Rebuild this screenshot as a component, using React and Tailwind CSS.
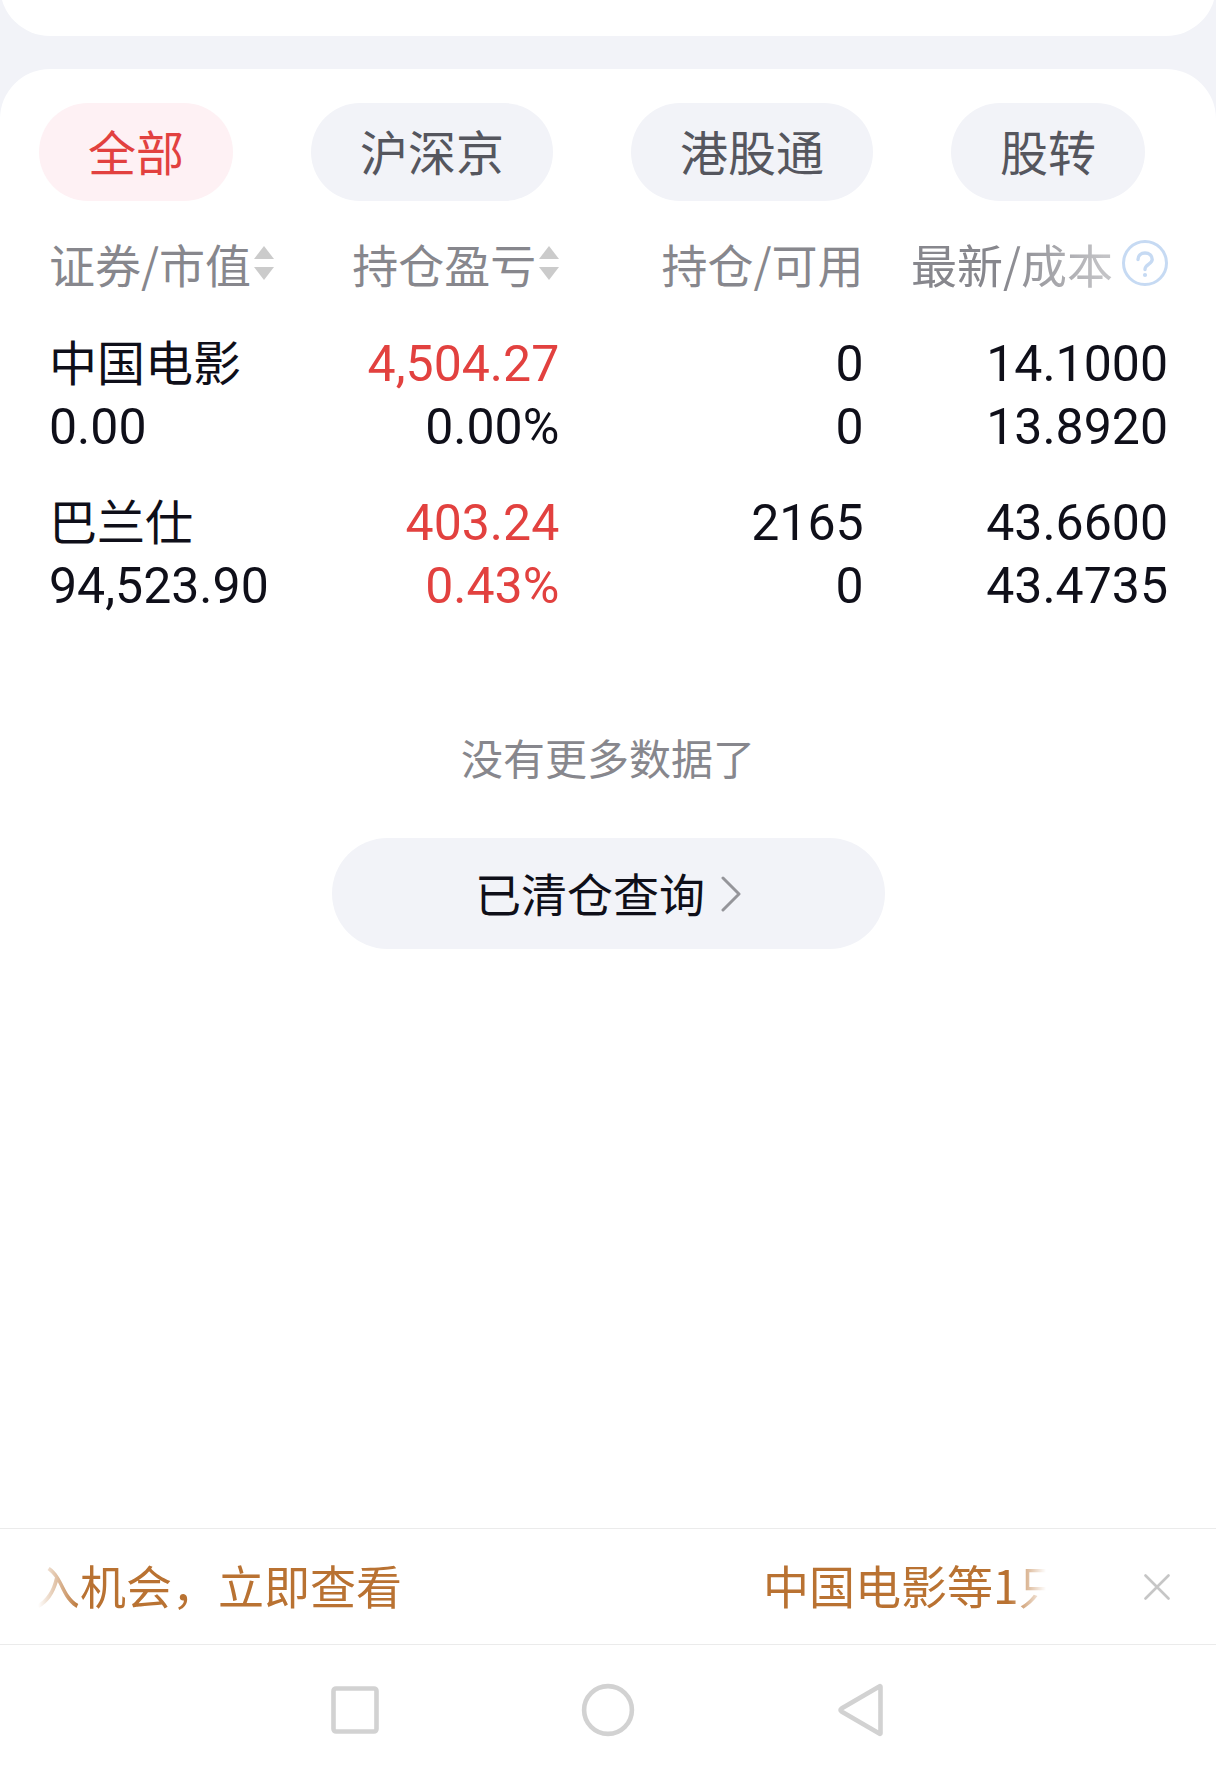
import React, { useState } from "react";

const tabs = ["全部", "沪深京", "港股通", "股转"];

const holdings = [
    { name: "中国电影", value: "0.00", profit: "4,504.27", rate: "0.00%", profitUp: true, rateUp: false, amount: "0", usable: "0", price: "14.1000", cost: "13.8920" },
    { name: "巴兰仕", value: "94,523.90", profit: "403.24", rate: "0.43%", profitUp: true, rateUp: true, amount: "2165", usable: "0", price: "43.6600", cost: "43.4735" },
];

const SortIcon = () => (
    <svg width="20" height="34" viewBox="0 0 20 34" fill="#cbcbcb" aria-hidden="true">
        <path d="M10 0 L20 13 H0 Z" />
        <path d="M10 34 L20 21 H0 Z" />
    </svg>
);

const HelpIcon = () => (
    <svg width="46" height="46" viewBox="0 0 46 46" fill="none" stroke="#c6daf3" aria-hidden="true">
        <circle cx="23" cy="23" r="21.5" strokeWidth="3" />
        <path d="M16 19.5 C16 15.5 19 13 23 13 C27.2 13 30.2 15.8 30.2 19.4 C30.2 24.2 23 24 23 29.5" strokeWidth="3.4" strokeLinecap="round" />
        <circle cx="23" cy="35" r="2.1" fill="#c6daf3" stroke="none" />
    </svg>
);

const Cell = ({ top, bottom, topUp, bottomUp }) => (
    <td className="pt-[18px] pb-[15px] text-right font-[Roboto,'Noto_Sans_CJK_SC',sans-serif] text-[50px] leading-[63px]">
        <div className={topUp ? "text-[#e2413f]" : ""}>{top}</div>
        <div className={bottomUp ? "text-[#e2413f]" : ""}>{bottom}</div>
    </td>
);

const App = () => {
    const [active, setActive] = useState("全部");
    const [showNotice, setShowNotice] = useState(true);

    return (
        <div className="flex min-h-screen flex-col bg-[#f2f3f8] font-['Noto_Sans_CJK_SC',sans-serif] text-[#0f0f19]">
            <div className="flex h-9 items-end overflow-hidden">
                <div className="h-20 w-full shrink-0 rounded-b-[50px] bg-white" />
            </div>

            <main className="mt-[33px] flex-1 rounded-t-[50px] bg-white pt-[34px]">
                <nav className="flex gap-[78px] px-[39px]">
                    {tabs.map((tab) => (
                        <button
                            key={tab}
                            type="button"
                            onClick={() => setActive(tab)}
                            className={`h-[98px] shrink-0 rounded-full px-[49px] pb-1 text-[48px] leading-none ${active === tab ? "bg-[#fef1f4] text-[#e2413f]" : "bg-[#f2f3f8] text-[#55565e]"}`}
                        >
                            {tab}
                        </button>
                    ))}
                </nav>

                <div className="pr-12 pl-[49px]">
                    <table className="w-full table-fixed">
                        <thead className="text-[46px] leading-[63px] whitespace-nowrap text-[#87878d]">
                            <tr className="h-[114px]">
                                <th className="w-[22.8%] pt-2.5 font-normal">
                                    <button type="button" className="flex items-center gap-[3px]">
                                        证券/市值 <SortIcon />
                                    </button>
                                </th>
                                <th className="w-[22.8%] pt-2.5 font-normal">
                                    <button type="button" className="ml-auto flex items-center gap-[3px]">
                                        持仓盈亏 <SortIcon />
                                    </button>
                                </th>
                                <th className="w-[27.2%] pt-2.5 text-right font-normal">持仓/可用</th>
                                <th className="w-[27.2%] pt-2.5 font-normal">
                                    <div className="flex items-center justify-end gap-[9px]">
                                        <span className="[mask-image:linear-gradient(to_right,black_45%,rgb(0_0_0/0.5)_95%)]">最新/成本</span>
                                        <button type="button" aria-label="成本说明">
                                            <HelpIcon />
                                        </button>
                                    </div>
                                </th>
                            </tr>
                        </thead>
                        <tbody>
                            {holdings.map((item) => (
                                <tr key={item.name}>
                                    <td className="pt-4 pb-[15px] whitespace-nowrap">
                                        <div className="text-[48px] leading-[59px]">{item.name}</div>
                                        <div className="mt-1.5 font-[Roboto,sans-serif] text-[50px] leading-[63px]">{item.value}</div>
                                    </td>
                                    <Cell top={item.profit} bottom={item.rate} topUp={item.profitUp} bottomUp={item.rateUp} />
                                    <Cell top={item.amount} bottom={item.usable} />
                                    <Cell top={item.price} bottom={item.cost} />
                                </tr>
                            ))}
                        </tbody>
                    </table>
                </div>

                <p className="mt-[92px] text-center text-[42px] leading-[63px] text-[#87878d]">没有更多数据了</p>

                <button type="button" className="mx-auto mt-[50px] flex h-[111px] w-[553px] items-center justify-center gap-4 rounded-full bg-[#f2f3f8] text-[46px] leading-none">
                    <span className="pb-1">已清仓查询</span>
                    <svg width="20" height="38" viewBox="0 0 20 38" fill="none" stroke="#95959a" strokeWidth="3" strokeLinecap="round" strokeLinejoin="round" aria-hidden="true">
                        <path d="M2 3 L18 19 L2 35" />
                    </svg>
                </button>
            </main>

            {showNotice && (
                <div className="flex h-[117px] items-center gap-[98px] border-y border-[#ebebeb] bg-white pr-[46px] pl-[34px]">
                    <div className="flex min-w-0 flex-1 gap-[361px] overflow-hidden pb-1 text-[46px] leading-[63px] whitespace-nowrap text-[#b97232] [mask-image:linear-gradient(to_right,transparent_4px,black_46px,black_calc(100%-38px),transparent)]">
                        <span>入机会，立即查看</span>
                        <span>中国电影等1只</span>
                    </div>
                    <button type="button" aria-label="关闭" onClick={() => setShowNotice(false)}>
                        <svg width="26" height="26" viewBox="0 0 26 26" fill="none" stroke="#c6c6c6" strokeWidth="2.6" strokeLinecap="round" aria-hidden="true">
                            <path d="M1.5 1.5 L24.5 24.5 M24.5 1.5 L1.5 24.5" />
                        </svg>
                    </button>
                </div>
            )}

            <footer className="bg-white">
                <div className="mx-auto grid h-[130px] w-5/8 grid-cols-3 place-items-center">
                    <button type="button" aria-label="最近任务">
                        <svg width="54" height="54" viewBox="0 0 54 54" fill="none" stroke="#d2d2d2" strokeWidth="4.6" aria-hidden="true">
                            <rect x="5.5" y="5.5" width="43" height="43" rx="2.5" />
                        </svg>
                    </button>
                    <button type="button" aria-label="主页">
                        <svg width="54" height="54" viewBox="0 0 54 54" fill="none" stroke="#d2d2d2" strokeWidth="4.6" aria-hidden="true">
                            <circle cx="27" cy="27" r="23.9" />
                        </svg>
                    </button>
                    <button type="button" aria-label="返回">
                        <svg width="54" height="54" viewBox="0 0 54 54" fill="none" stroke="#d2d2d2" strokeWidth="4.6" strokeLinejoin="round" aria-hidden="true">
                            <path d="M46.5 3.8 V50.2 Q46.5 51.4 45.3 50.6 L7.5 28.4 Q5.5 27 7.5 25.6 L45.3 3.4 Q46.5 2.6 46.5 3.8 Z" />
                        </svg>
                    </button>
                </div>
            </footer>
        </div>
    );
};

export default App;
